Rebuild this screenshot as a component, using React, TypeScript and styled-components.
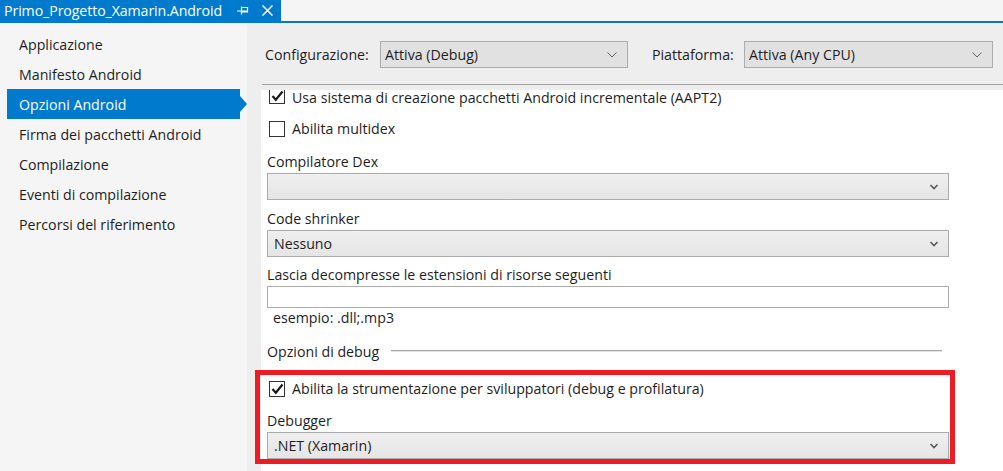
import React from "react";
import styled, { createGlobalStyle } from "styled-components";

const GlobalStyle = createGlobalStyle`
  html, body { margin: 0; padding: 0; background: #ffffff; }
  body { font-family: "Open Sans", "Noto Sans", sans-serif; color: #1e1e1e; }
  * { box-sizing: border-box; }
`;

const FONT_SIZE = "14.2px";

const Window = styled.div`
  width: 1003px;
  height: 471px;
  overflow: hidden;
  display: flex;
  flex-direction: column;
  font-size: ${FONT_SIZE};
  background: #eeeeee;
`;

const TabStrip = styled.div`
  height: 23px;
  flex: none;
  display: flex;
  background: #f5f5f5;
  border-bottom: 2px solid #007acc;
`;

const Tab = styled.div`
  width: 281px;
  height: 21px;
  background: #007acc;
  color: #ffffff;
  display: flex;
  align-items: center;
  padding-left: 4px;
  font-size: 14.2px;
  letter-spacing: -0.1px;
`;

const TabTitle = styled.span`
  flex: 1;
  white-space: nowrap;
`;

const TabIcon = styled.span<{ $mr: number }>`
  width: 12px;
  height: 12px;
  display: flex;
  align-items: center;
  justify-content: center;
  margin-right: ${(p) => p.$mr}px;
`;

const Body = styled.div`
  flex: 1;
  display: flex;
  min-height: 0;
`;

const Sidebar = styled.nav`
  width: 247px;
  flex: none;
  background: #f5f5f5;
  padding-top: 6px;
`;

const NavItem = styled.div<{ $active?: boolean }>`
  position: relative;
  margin-left: 7px;
  width: 233px;
  height: 30px;
  display: flex;
  align-items: center;
  padding-left: 12px;
  white-space: nowrap;
  background: ${(p) => (p.$active ? "#007acc" : "transparent")};
  color: ${(p) => (p.$active ? "#ffffff" : "#1e1e1e")};
`;

const NavArrow = styled.span`
  position: absolute;
  right: -7px;
  top: 50%;
  margin-top: -8px;
  width: 0;
  height: 0;
  border-top: 8px solid transparent;
  border-bottom: 8px solid transparent;
  border-left: 7px solid #007acc;
`;

const Main = styled.div`
  flex: 1;
  display: flex;
  flex-direction: column;
  background: #eeeeee;
  min-width: 0;
`;

const Header = styled.div`
  height: 61px;
  flex: none;
  display: flex;
  align-items: center;
  padding: 2px 0 0 18px;
`;

const HeaderLabel = styled.span<{ $w: number }>`
  width: ${(p) => p.$w}px;
  flex: none;
  white-space: nowrap;
`;

const HeaderSelect = styled.div<{ $w: number; $mr?: number }>`
  width: ${(p) => p.$w}px;
  margin-right: ${(p) => p.$mr ?? 0}px;
  height: 27px;
  flex: none;
  display: flex;
  align-items: center;
  padding: 0 10px 0 4px;
  background: #e1e1e1;
  border: 1px solid #acacac;
`;

const SelectText = styled.span`
  flex: 1;
  white-space: nowrap;
`;

const Separator = styled.div`
  height: 1px;
  flex: none;
  margin-left: 15px;
  background: #a0a0a0;
`;

const Scroller = styled.div`
  flex: 1;
  margin: 5px 0 0 8px;
  padding-left: 6px;
  min-height: 0;
`;

const Content = styled.div`
  min-height: 420px;
  padding: 0 54px 0 6px;
  background: #ffffff;
  display: flex;
  flex-direction: column;
`;

const CheckRow = styled.label<{ $h: number; $top?: boolean }>`
  height: ${(p) => p.$h}px;
  line-height: 15px;
  display: flex;
  align-items: ${(p) => (p.$top ? "flex-start" : "center")};
  padding-left: 2px;
  gap: 7px;
  white-space: nowrap;
`;

const Box = styled.span<{ $cut?: boolean }>`
  width: 16px;
  height: ${(p) => (p.$cut ? 14 : 16)}px;
  flex: none;
  border: 1px solid #333333;
  border-top-width: ${(p) => (p.$cut ? 0 : 1)}px;
  background: #ffffff;
  display: flex;
  align-items: ${(p) => (p.$cut ? "flex-end" : "center")};
  padding-bottom: ${(p) => (p.$cut ? 1 : 0)}px;
  justify-content: center;
  overflow: hidden;
`;

const Field = styled.div<{ $mt: number }>`
  margin-top: ${(p) => p.$mt}px;
  display: flex;
  flex-direction: column;
`;

const FieldLabel = styled.div`
  height: 21px;
  line-height: 21px;
  white-space: nowrap;
`;

const Dropdown = styled.div`
  height: 27px;
  display: flex;
  align-items: center;
  padding: 0 9px 0 6px;
  margin-top: 1px;
  background: linear-gradient(#efefef, #e5e5e5);
  border: 1px solid #acacac;
`;

const TextInput = styled.div`
  height: 22px;
  margin-top: 1px;
  background: #ffffff;
  border: 1px solid #acacac;
`;

const Hint = styled.div`
  height: 20px;
  line-height: 20px;
  padding-left: 6px;
`;

const GroupHeader = styled.div`
  margin-top: 13px;
  height: 20px;
  display: flex;
  align-items: center;
  gap: 12px;
  padding-right: 7px;
  white-space: nowrap;
`;

const GroupLine = styled.span`
  flex: 1;
  height: 2px;
  border-top: 1px solid #a8a8a8;
  border-bottom: 1px solid #e2e2e2;
`;

const Highlight = styled.div`
  margin: 9px -6px 0 -12px;
  height: 94px;
  border: 5px solid #ed1c24;
  padding: 0 1px 0 7px;
  overflow: hidden;
  display: flex;
  flex-direction: column;
`;

const Chevron = ({ thin }: { thin?: boolean }) => (
  <svg width="10" height="6" viewBox="0 0 10 6">
    <polyline
      points={thin ? "0.5,0.5 5,5 9.5,0.5" : "1.5,1 5,4.5 8.5,1"}
      fill="none"
      stroke={thin ? "#606060" : "#5a5a5a"}
      strokeWidth={thin ? 1 : 1.6}
    />
  </svg>
);

const Check = () => (
  <svg width="13" height="12" viewBox="0 0 13 12">
    <polyline points="1.5,6 4.8,9.8 11.5,1.5" fill="none" stroke="#1a1a1a" strokeWidth="2.2" />
  </svg>
);

const navItems = [
  "Applicazione",
  "Manifesto Android",
  "Opzioni Android",
  "Firma dei pacchetti Android",
  "Compilazione",
  "Eventi di compilazione",
  "Percorsi del riferimento",
];

export default function App() {
  return (
    <>
      <GlobalStyle />
      <Window>
        <TabStrip>
          <Tab>
            <TabTitle>Primo_Progetto_Xamarin.Android</TabTitle>
            <TabIcon $mr={12}>
              <svg width="12" height="11" viewBox="0 0 12 11">
                <path d="M0 6H4M4.5 1.5V9.5M4.5 2.5H10.5V7H4.5M4.5 6H10.5" fill="none" stroke="#ffffff" strokeWidth="1.2" />
              </svg>
            </TabIcon>
            <TabIcon $mr={8}>
              <svg width="11" height="11" viewBox="0 0 11 11">
                <path d="M0.5 0.5L10.5 10.5M10.5 0.5L0.5 10.5" stroke="#ffffff" strokeWidth="1.5" />
              </svg>
            </TabIcon>
          </Tab>
        </TabStrip>
        <Body>
          <Sidebar>
            {navItems.map((n) => (
              <NavItem key={n} $active={n === "Opzioni Android"}>
                {n}
                {n === "Opzioni Android" && <NavArrow />}
              </NavItem>
            ))}
          </Sidebar>
          <Main>
            <Header>
              <HeaderLabel $w={115}>Configurazione:</HeaderLabel>
              <HeaderSelect $w={248} $mr={24}>
                <SelectText>Attiva (Debug)</SelectText>
                <Chevron thin />
              </HeaderSelect>
              <HeaderLabel $w={92}>Piattaforma:</HeaderLabel>
              <HeaderSelect $w={249}>
                <SelectText>Attiva (Any CPU)</SelectText>
                <Chevron thin />
              </HeaderSelect>
            </Header>
            <Separator />
            <Scroller>
              <Content>
                <CheckRow $h={23} $top>
                  <Box $cut><Check /></Box>
                  Usa sistema di creazione pacchetti Android incrementale (AAPT2)
                </CheckRow>
                <CheckRow $h={31}>
                  <Box />
                  Abilita multidex
                </CheckRow>
                <Field $mt={7}>
                  <FieldLabel>Compilatore Dex</FieldLabel>
                  <Dropdown>
                    <SelectText />
                    <Chevron />
                  </Dropdown>
                </Field>
                <Field $mt={8}>
                  <FieldLabel>Code shrinker</FieldLabel>
                  <Dropdown>
                    <SelectText>Nessuno</SelectText>
                    <Chevron />
                  </Dropdown>
                </Field>
                <Field $mt={7}>
                  <FieldLabel>Lascia decompresse le estensioni di risorse seguenti</FieldLabel>
                  <TextInput />
                </Field>
                <Hint>esempio: .dll;.mp3</Hint>
                <GroupHeader>
                  Opzioni di debug
                  <GroupLine />
                </GroupHeader>
                <Highlight>
                  <CheckRow $h={29}>
                    <Box><Check /></Box>
                    Abilita la strumentazione per sviluppatori (debug e profilatura)
                  </CheckRow>
                  <Field $mt={8}>
                    <FieldLabel>Debugger</FieldLabel>
                    <Dropdown>
                      <SelectText>.NET (Xamarin)</SelectText>
                      <Chevron />
                    </Dropdown>
                  </Field>
                </Highlight>
              </Content>
            </Scroller>
          </Main>
        </Body>
      </Window>
    </>
  );
}
